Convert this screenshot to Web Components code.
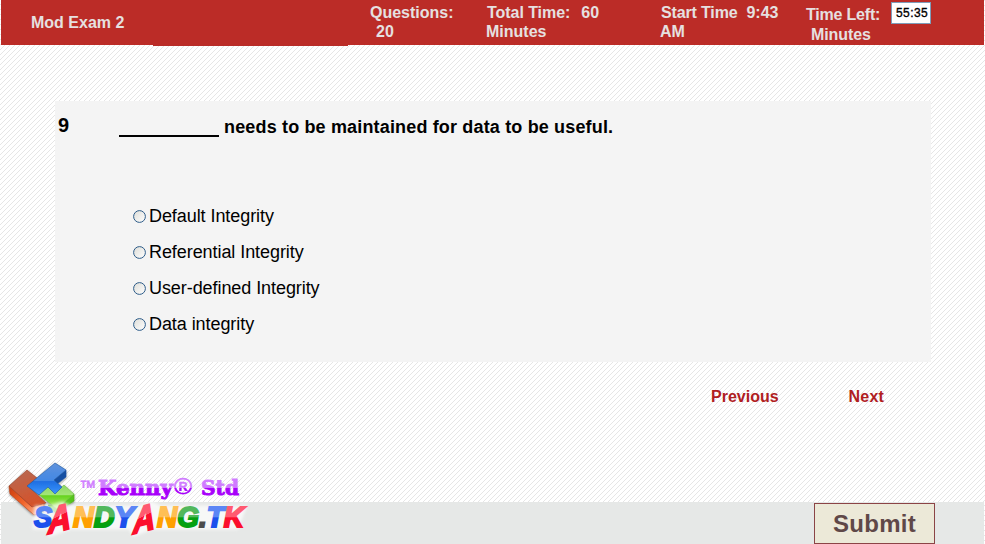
<!DOCTYPE html>
<html lang="en"><head><meta charset="utf-8"><title>Mod Exam 2</title>
<style>html,body{margin:0;height:100%;overflow:hidden}</style></head>
<body><exam-page></exam-page>
<script>
const define = (name, html) => customElements.define(name, class extends HTMLElement {
  constructor() {
    super();
    const t = document.createElement('template');
    t.innerHTML = html;
    this.attachShadow({ mode: 'open' }).append(t.content.cloneNode(true));
  }
});

define('header-stat', `<style>
:host{display:block;font-weight:bold;font-size:16px;line-height:19px;color:#e6e0e0;white-space:pre}
</style><slot></slot>`);

define('time-box', `<style>
:host{display:block;box-sizing:border-box;width:40px;height:22px;border:1px solid #7f9db9;background:#fff;color:#000;
font:12px/20px "Liberation Sans",Arial,sans-serif;-webkit-text-stroke:.35px #000;letter-spacing:.4px;padding-left:4px;white-space:nowrap}
</style><slot></slot>`);

define('exam-header', `<style>
:host{display:grid;grid-template-columns:339px 116px 174px 146px 85px 1fr;box-sizing:border-box;height:45px;margin:0 1px;padding-left:30px;background:#bb2c27;position:relative}
.title{padding-top:13px}.q{padding-top:3px}.left{padding-top:5px;line-height:20px}
time-box{margin-top:2px}
.tab{position:absolute;left:152px;top:45px;width:195px;height:1px;background:#b82d28}
</style>
<header-stat class="title">Mod Exam 2</header-stat>
<header-stat class="q"><div>Questions:</div><div style="padding-left:6px">20</div></header-stat>
<header-stat class="q"><div style="padding-left:1px;letter-spacing:-.05px">Total Time:<span style="padding-left:11px">60</span></div><div>Minutes</div></header-stat>
<header-stat class="q"><div style="padding-left:1px;letter-spacing:-.15px">Start Time<span style="padding-left:9px;letter-spacing:0">9:43</span></div><div>AM</div></header-stat>
<header-stat class="left"><div style="letter-spacing:-.2px">Time Left:</div><div style="padding-left:5px;letter-spacing:-.1px">Minutes</div></header-stat>
<time-box>55:35</time-box><div class="tab"></div>`);

define('answer-option', `<style>
:host{display:flex;align-items:center;height:36px;font-size:18px;letter-spacing:-.07px;white-space:nowrap}
svg{width:13px;height:13px;margin:1px 3px 0 0}
</style><svg viewBox="0 0 13 13"><defs><linearGradient id="g" x2="1" y2="1"><stop stop-color="#dcdcd7"/><stop offset="1" stop-color="#fff"/></linearGradient></defs><circle cx="6.5" cy="6.5" r="5.9" fill="url(#g)" stroke="#2c5b88"/></svg><slot></slot>`);

define('question-panel', `<style>
:host{display:block;box-sizing:border-box;width:876px;height:261px;margin:56px 0 0 55px;background:#f4f4f4}
.head{display:flex;height:97px;font-weight:bold}
.num{width:64px;padding:13px 0 0 3px;box-sizing:border-box;font-size:20px;line-height:23px}
.blank{width:100px;height:2px;background:#000;margin:34px 5px 0 0}
.text{font-size:18px;line-height:21px;padding-top:16px;white-space:nowrap;letter-spacing:.16px}
.options{padding-left:78px}
</style><div class="head"><div class="num">9</div><div class="blank"></div><div class="text">needs to be maintained for data to be useful.</div></div>
<div class="options"><slot></slot></div>`);

define('exam-nav', `<style>
:host{display:flex;gap:70px;padding:25px 0 0 711px;color:#b0201f;font-weight:bold;font-size:16px;line-height:19px}
</style><span>Previous</span><span style="letter-spacing:.2px">Next</span>`);

define('submit-button', `<style>
:host{display:block;box-sizing:border-box;width:121px;height:41px;border:1px solid #8b4446;background:#ece9d8;color:#5f4848;text-align:center;font-weight:bold;font-size:24px;line-height:39px;letter-spacing:.3px}
</style><slot></slot>`);

define('exam-footer', `<style>
:host{display:flex;justify-content:flex-end;box-sizing:border-box;height:42px;margin:auto 1px 0;padding:1px 49px 0 0;background:#e6e8e7}
</style><submit-button>Submit</submit-button>`);

// Two-tone glossy letter fills: light above the split line, saturated below it.
const tones = { blue: ['#5b86f5', '#1c50ec'], red: ['#ff5a70', '#fb0f2c'], orange: ['#ffbf55', '#ffa000'], green: ['#52b85c', '#05a010'], grey: ['#666', '#4c4c4c'] };
const toneDefs = Object.entries(tones).map(([n, [a, b]]) =>
  `<linearGradient id="t-${n}" gradientUnits="userSpaceOnUse" x1="0" x2="0" y1="50" y2="74"><stop offset=".5" stop-color="${a}"/><stop offset=".53" stop-color="${b}"/></linearGradient>`).join('');
const run = (x, w, parts) => `<text x="${x}" y="72" font-size="29" textLength="${w}" lengthAdjust="spacingAndGlyphs">${parts.map(([c, t]) => `<tspan fill="url(#t-${t})" stroke="url(#t-${t})">${c}</tspan>`).join('')}</text>`;
const tallA = (x, w) => `<text transform="translate(${x} 79) skewY(-14)" font-size="37" textLength="${w}" lengthAdjust="spacingAndGlyphs" fill="url(#t-a)" stroke="url(#t-a)">A</text>`;
const wordmark = run(34, 18, [['S', 'blue']]) + tallA(48, 23)
  + run(73, 61, [['N', 'orange'], ['D', 'green'], ['Y', 'blue']]) + tallA(133, 22)
  + run(157, 87, [['N', 'orange'], ['G', 'green'], ['.', 'grey'], ['T', 'blue'], ['K', 'red']]);

define('site-logo', `<style>
:host{display:block;position:absolute;left:0;top:455px;width:260px;height:89px}
svg{display:block}
text{font-weight:bold}
.kenny{font-family:"DejaVu Serif",serif}
.light{font-family:"Liberation Sans",Arial,sans-serif;font-weight:normal}
.site{font-family:"Liberation Sans",Arial,sans-serif;font-style:italic}
</style>
<svg width="260" height="89" viewBox="0 0 260 89">
<defs>${toneDefs}
<linearGradient id="t-a" gradientUnits="userSpaceOnUse" x1="0" x2="4" y1="-28" y2="-12"><stop offset=".9" stop-color="#ff5a70"/><stop offset=".93" stop-color="#fb0f2c"/></linearGradient>
<linearGradient id="r" x2=".4" y2="1"><stop stop-color="#b56b55"/><stop offset="1" stop-color="#d4532b"/></linearGradient>
<linearGradient id="r2" x2="1" y2="1"><stop stop-color="#c83a0c"/><stop offset=".5" stop-color="#f2662c"/><stop offset="1" stop-color="#ffc5a4"/></linearGradient>
<linearGradient id="b" x2="0" y2="1"><stop stop-color="#5f92dc"/><stop offset=".55" stop-color="#4388e4"/><stop offset=".58" stop-color="#1e6fe2"/><stop offset="1" stop-color="#3d97ff"/></linearGradient>
<linearGradient id="gr" x2="0" y2="1"><stop stop-color="#8fd765"/><stop offset=".4" stop-color="#a3e578"/><stop offset=".45" stop-color="#66d320"/><stop offset="1" stop-color="#b2f06b"/></linearGradient>
<linearGradient id="p" gradientUnits="userSpaceOnUse" x1="0" x2="0" y1="23" y2="44"><stop offset=".45" stop-color="#d07cff"/><stop offset=".5" stop-color="#a700fa"/></linearGradient>
<filter id="s" x="-20%" y="-20%" width="150%" height="150%"><feDropShadow dx="0" dy="1" stdDeviation="1.2" flood-opacity=".45"/></filter>
<filter id="halo" x="-10%" y="-30%" width="120%" height="170%"><feGaussianBlur stdDeviation="1.4"/></filter>
</defs>
<g filter="url(#s)" stroke-linejoin="round" stroke-width=".6">
<path d="M9 31 31 51 44 47 44 56 34 60 10 39Z" fill="url(#r2)" stroke="#b34218"/>
<path d="M9 31 27 15 37 23 28 31 46 48 32 52Z" fill="url(#r)" stroke="#984027"/>
<path d="M74 39 74 46 56 58 48 50 57 51Z" fill="#55c51b" stroke="#4fa524"/>
<path d="M38 39 48 31 55 38 64 30 74 39 57 54Z" fill="url(#gr)" stroke="#70b949"/>
<path d="M54 25 66 15 66 22 57 29Z" fill="#174fa2" stroke="#174fa2"/>
<path d="M27 31 55 8 66 15 54 25 62 32 55 39 48 32 39 40Z" fill="url(#b)" stroke="#1f579f"/>
</g>
<g fill="url(#p)" stroke="url(#p)">
<text class="light" x="79" y="38" font-size="18" stroke-width=".6" textLength="17" lengthAdjust="spacingAndGlyphs">™</text>
<g class="kenny" stroke-width=".9"><text x="98" y="39.5" font-size="21" textLength="75" lengthAdjust="spacingAndGlyphs">Kenny</text>
<text x="201" y="39.5" font-size="21" textLength="38" lengthAdjust="spacingAndGlyphs">Std</text></g>
<text class="light" x="174" y="39" font-size="22" stroke-width=".6" textLength="18" lengthAdjust="spacingAndGlyphs">®</text></g>
<g class="site">
<path filter="url(#halo)" d="M36 52H50L62 48 72 52H138L152 48 160 52H245L237 73H152L134 80 130 73H70L50 80 48 73H34Z" fill="#fff" opacity=".7" stroke="#fff" stroke-width="3"/>
<g stroke-width="2">${wordmark}</g></g>
</svg>`);

define('exam-page', `<style>
:host{display:flex;flex-direction:column;position:relative;isolation:isolate;width:985px;height:544px;overflow:hidden;
font-family:"Liberation Sans",Arial,sans-serif;color:#000;background:#fff}
.hatch{position:absolute;inset:0;width:100%;height:100%;z-index:-1}
</style>
<svg class="hatch"><defs><pattern id="h" width="5" height="5" patternUnits="userSpaceOnUse"><path d="M-1 6 6 -1M-1 1 1 -1M4 6 6 4" stroke="#e6e6e6" stroke-width="1"/></pattern></defs><rect width="985" height="544" fill="url(#h)"/></svg>
<exam-header></exam-header>
<question-panel><answer-option>Default Integrity</answer-option><answer-option>Referential Integrity</answer-option><answer-option>User-defined Integrity</answer-option><answer-option>Data integrity</answer-option></question-panel>
<exam-nav></exam-nav><exam-footer></exam-footer><site-logo></site-logo>`);
</script></body></html>
